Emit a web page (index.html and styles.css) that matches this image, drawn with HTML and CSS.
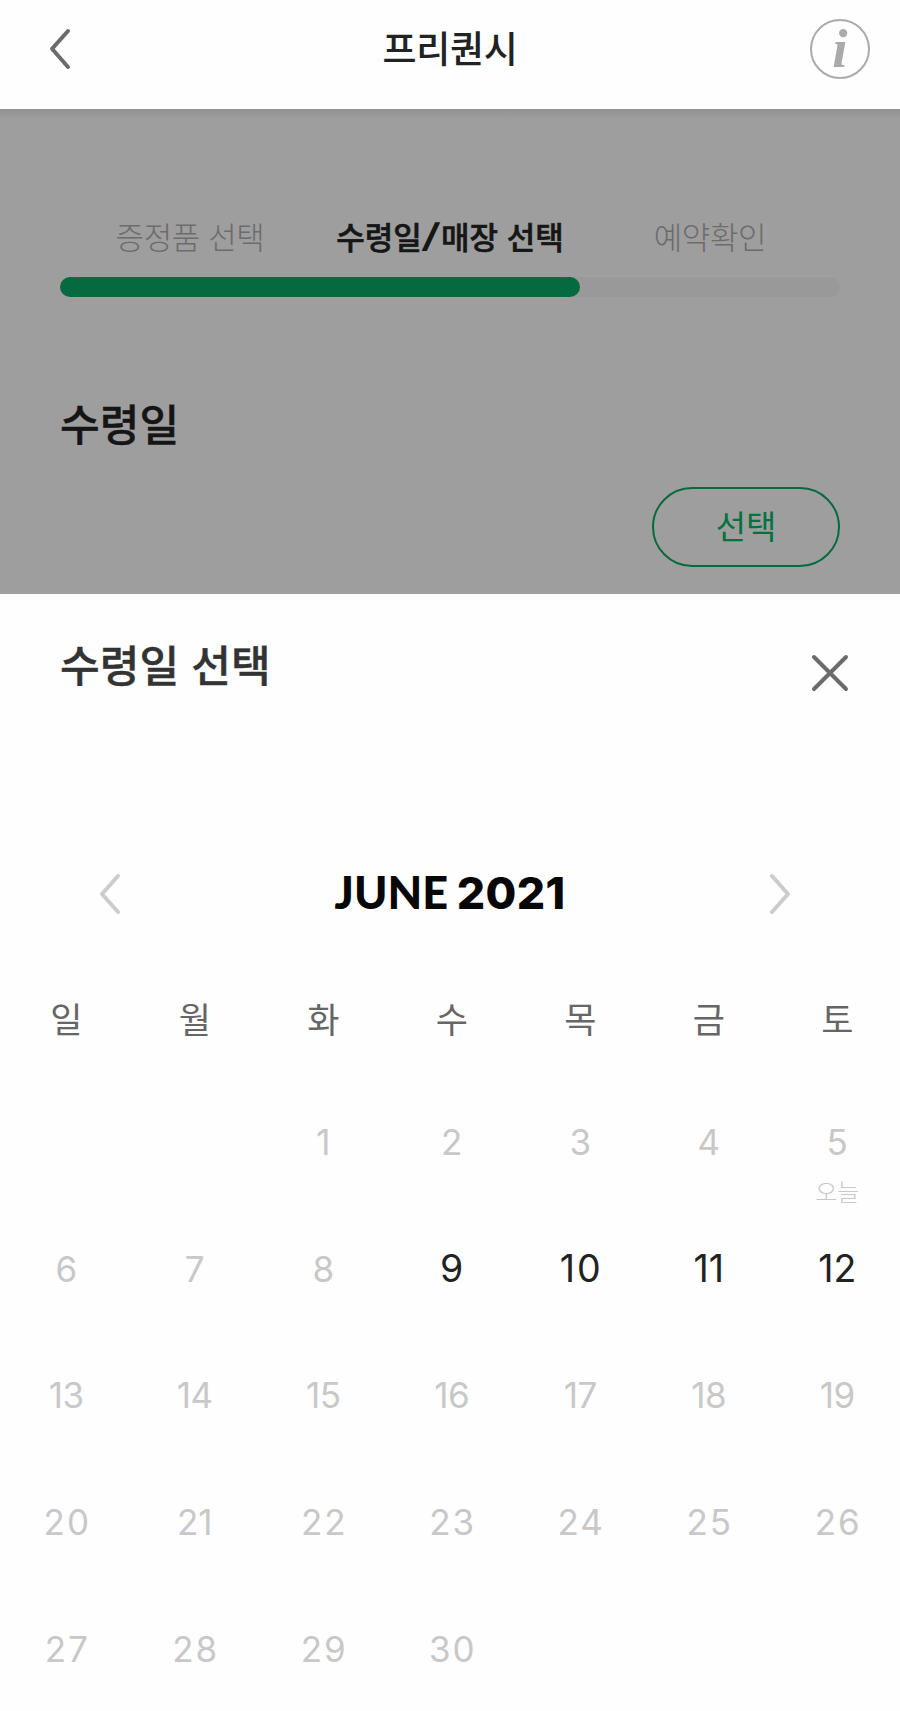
FILE: index.html
```html
<!DOCTYPE html>
<html lang="ko">
<head>
<meta charset="utf-8">
<title>프리퀀시</title>
<link rel="stylesheet" href="styles.css">
</head>
<body>
<header class="topbar">
  <svg class="back" viewBox="0 0 24 44"><path d="M20 4 4 21.8 20 40"/></svg>
  <h1 class="topbar-title">프리퀀시</h1>
  <span class="info">i</span>
</header>
<main class="page">
  <div class="steps">
    <span class="step">증정품 선택</span>
    <span class="step active">수령일<span class="slash">/</span>매장 선택</span>
    <span class="step">예약확인</span>
  </div>
  <div class="track"><div class="fill"></div></div>
  <h2 class="section-title">수령일</h2>
  <button class="pick">선택</button>
</main>
<section class="sheet">
  <div class="sheet-head">
    <h2 class="sheet-title">수령일 선택</h2>
    <svg class="close" viewBox="0 0 40 40"><path d="M4 4 36 36M36 4 4 36"/></svg>
  </div>
  <div class="month">
    <svg class="arrow" viewBox="0 0 24 44"><path d="M20 4 4 22 20 40"/></svg>
    <h3 class="month-name">JUNE <span class="year">2021</span></h3>
    <svg class="arrow next" viewBox="0 0 24 44"><path d="M4 4 20 22 4 40"/></svg>
  </div>
  <div class="grid weekdays"><span>일</span><span>월</span><span>화</span><span>수</span><span>목</span><span>금</span><span>토</span></div>
  <div class="grid days">
    <span></span><span></span><span>1</span><span>2</span><span>3</span><span>4</span><span>5<small class="today">오늘</small></span>
    <span>6</span><span>7</span><span>8</span><span class="open">9</span><span class="open wide">10</span><span class="open">11</span><span class="open">12</span>
    <span class="teen">13</span><span class="teen">14</span><span class="teen">15</span><span class="teen">16</span><span class="teen">17</span><span class="teen">18</span><span class="teen">19</span>
    <span class="wide">20</span><span>21</span><span class="wide">22</span><span class="wide">23</span><span class="wide">24</span><span class="wide">25</span><span class="wide">26</span>
    <span class="wide">27</span><span class="wide">28</span><span class="wide">29</span><span class="wide">30</span>
  </div>
</section>
</body>
</html>
```
FILE: styles.css
```css
* { box-sizing: border-box; }
body {
  margin: 0;
  width: 900px;
  height: 1711px;
  overflow: hidden;
  background: #fefefe;
  font-family: "Noto Sans CJK KR", sans-serif;
  color: #222;
}
h1, h2, h3 { margin: 0; }
svg { display: block; fill: none; stroke-linecap: round; stroke-linejoin: round; }
.topbar {
  height: 109px;
  padding: 0 30px 11px 48px;
  display: grid;
  grid-template-columns: 60px 1fr 60px;
  align-items: center;
}
.back { width: 24px; height: 44px; stroke: #6b6b6b; stroke-width: 4; }
.topbar-title { text-align: center; font-size: 37px; font-weight: 500; line-height: 54px; letter-spacing: -.3px; padding: 0 18px 4px 0; }
.info {
  justify-self: end;
  width: 60px;
  height: 60px;
  border: 2.5px solid #aaa;
  border-radius: 50%;
  color: #aaa;
  font: italic bold 55px/55px "Liberation Serif", serif;
  text-align: center;
}
.page {
  height: 485px;
  padding: 102px 60px 0;
  background: linear-gradient(#929292, #9e9e9e 10px);
  display: flex;
  flex-direction: column;
}
.steps { display: grid; grid-template-columns: repeat(3, 260px); text-align: center; line-height: 50px; }
.step { font-size: 31px; font-weight: 300; letter-spacing: -.4px; color: #6c6c6c; white-space: nowrap; }
.step.active { font-weight: 500; letter-spacing: 0; color: #161616; -webkit-text-stroke: .6px #161616; }
.slash { display: inline-block; margin: 0 3.5px; transform: skewX(-8deg) scaleY(.88); -webkit-text-stroke: 2.5px #161616; }
.track { margin-top: 16px; height: 20px; border-radius: 10px; background: #999; }
.fill { width: 520px; height: 20px; border-radius: 10px; background: #056b3f; }
.section-title { margin-top: 95px; font-size: 43.2px; font-weight: 500; line-height: 60px; color: #151515; -webkit-text-stroke: .4px #151515; }
.pick {
  align-self: flex-end;
  margin-top: 35px;
  width: 188px;
  height: 80px;
  padding: 0 0 4px;
  border: 2px solid #056b3f;
  border-radius: 40px;
  background: none;
  color: #05713f;
  font: 400 33px/48px "Noto Sans CJK KR", sans-serif;
}
.sheet { height: 1117px; background: #fefefe; }
.sheet-head { display: flex; justify-content: space-between; padding: 39px 50px 0 60px; }
.sheet-title { font-size: 43.2px; font-weight: 500; line-height: 60px; color: #333; -webkit-text-stroke: .4px #333; }
.close { width: 40px; height: 40px; margin-top: 20px; stroke: #6b6b6b; stroke-width: 4; }
.month { display: flex; justify-content: space-between; align-items: center; height: 60px; margin-top: 171px; padding: 0 108px 0 98px; }
.arrow { width: 24px; height: 44px; stroke: #ccc; stroke-width: 4; }
.month-name { font: 900 45px/60px Lato, sans-serif; color: #070707; padding: 0 0 3px 10px; }
.year { font: 800 44.5px/60px Inter, sans-serif; letter-spacing: .4px; margin-left: -2px; }
.grid { display: grid; grid-template-columns: repeat(7, 128.5px); margin-left: 2px; text-align: center; }
.weekdays { margin-top: 67px; font-size: 35px; line-height: 54px; color: #666; }
.days { grid-auto-rows: 126.7px; margin-top: 70px; font: 35px/54px Inter, sans-serif; color: #c8c8c8; }
.open { font-size: 37.5px; color: #222; }
.teen { letter-spacing: -.5px; }
.wide { letter-spacing: 2px; padding-left: 2px; }
.today { display: block; margin-top: 4px; font: 300 24px/36px "Noto Sans CJK KR", sans-serif; letter-spacing: 0; color: #c8c8c8; }
```
